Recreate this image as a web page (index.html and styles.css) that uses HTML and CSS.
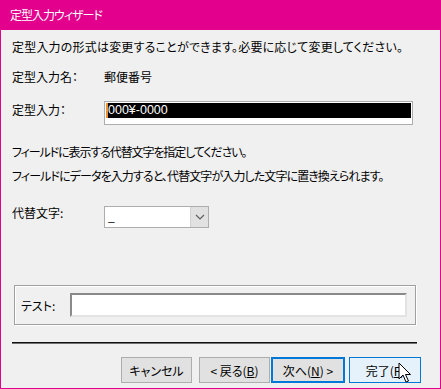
FILE: index.html
```html
<!DOCTYPE html>
<html>

<head>
    <meta charset="UTF-8">
    <title>定型入力ウィザード</title>
    <link rel="stylesheet" href="styles.css">
</head>

<body>
    <div class="window">
        <div class="titlebar">定型入力ウィザード</div>

        <div class="content">
            <p class="line first">定型入力の形式は変更することができます。必要に応じて変更してください。</p>

            <div class="field name-row">
                <span class="label">定型入力名：</span>
                <span class="value">郵便番号</span>
            </div>

            <div class="field mask-row">
                <span class="label">定型入力：</span>
                <div class="mask-box"><span class="selected">000¥-0000</span></div>
            </div>

            <p class="line hint">フィールドに表示する代替文字を指定してください。</p>
            <p class="line hint2">フィールドにデータを入力すると、代替文字が入力した文字に置き換えられます。</p>

            <div class="field placeholder-row">
                <span class="label">代替文字:</span>
                <div class="combo">
                    <span class="combo-text">_</span>
                    <span class="combo-btn">
                        <svg width="10" height="6" viewBox="0 0 10 6"><path d="M1 1 L5 5 L9 1" fill="none" stroke="#606060" stroke-width="1.2"/></svg>
                    </span>
                </div>
            </div>

            <div class="test-group">
                <span class="test-label">テスト:</span>
                <div class="test-input"></div>
            </div>

            <div class="separator"></div>

            <div class="buttons">
                <button class="btn cancel">キャンセル</button>
                <button class="btn back">&lt; 戻る(<u>B</u>)</button>
                <button class="btn next">次へ(<u>N</u>) &gt;</button>
                <button class="btn finish">完了(<u>F</u>)</button>
            </div>
        </div>

        <svg class="cursor" width="14" height="22" viewBox="0 0 14 22">
            <path d="M1 1 L1 17 L5 13 L8 20 L10.5 19 L7.5 12.5 L12.5 12.5 Z" fill="#fff" stroke="#000" stroke-width="1" stroke-linejoin="round"/>
        </svg>
    </div>
</body>

</html>
```

FILE: styles.css
```css
body {
    margin: 0;
    padding: 0;
    font-family: 'Noto Sans CJK JP', 'Noto Sans', sans-serif;
    font-size: 12px;
    font-feature-settings: "palt";
    color: #000;
    background: #f0f0f0;
}

.window {
    position: relative;
    width: 441px;
    height: 389px;
    box-sizing: border-box;
    border: 1px solid #e3008c;
    border-top: none;
    background: #f0f0f0;
    overflow: hidden;
}

.titlebar {
    height: 30px;
    margin: 0 -1px;
    padding-left: 10px;
    background: #e3008c;
    color: #fff;
    line-height: 30px;
    letter-spacing: -1px;
}

.content {
    padding: 0 0 0 11px;
}

.line {
    margin: 0;
    height: 16px;
    line-height: 16px;
    white-space: nowrap;
}

.first {
    margin-top: 9px;
    letter-spacing: 0.2px;
}

.field {
    display: flex;
    align-items: flex-start;
    line-height: 16px;
}

.label {
    width: 92px;
    flex: none;
}

.name-row {
    margin-top: 14px;
    height: 16px;
}

.mask-row {
    margin-top: 17px;
    height: 24px;
}

.mask-box {
    width: 307px;
    height: 22px;
    border: 1px solid #adadad;
    background: #fff;
    margin-top: -1px;
}

.selected {
    display: block;
    margin: 1px 1px 0 1px;
    height: 15px;
    background: #000;
    color: #fff;
    font-family: 'Liberation Sans', 'Noto Sans', sans-serif;
    font-size: 12.5px;
    line-height: 15px;
    border-left: 2px solid #f09030;
}

.hint {
    margin-top: 18px;
    letter-spacing: -1.1px;
}

.hint2 {
    margin-top: 8px;
    letter-spacing: -0.9px;
}

.placeholder-row {
    margin-top: 21px;
    height: 22px;
}

.combo {
    display: flex;
    width: 103px;
    height: 20px;
    border: 1px solid #adadad;
    background: #fff;
    margin-top: 1px;
}

.combo-text {
    flex: 1;
    padding-left: 3px;
    line-height: 18px;
}

.combo-btn {
    width: 17px;
    display: flex;
    align-items: center;
    justify-content: center;
    background: #e1e1e1;
    border-left: 1px solid #d0d0d0;
}

.test-group {
    display: flex;
    align-items: center;
    margin: 58px 0 0 2px;
    width: 400px;
    height: 38px;
    border: 1px solid #a0a0a0;
    box-shadow: inset 1px 1px 0 #fff, 1px 1px 0 #fff;
}

.test-label {
    width: 55px;
    padding-left: 6px;
    box-sizing: border-box;
}

.test-input {
    width: 333px;
    height: 20px;
    border-style: solid;
    border-width: 2px;
    border-color: #8a8a8a #e3e3e3 #e3e3e3 #8a8a8a;
    background: #fff;
}

.separator {
    margin-top: 17px;
    width: 405px;
    height: 0;
    border-top: 1px solid #101010;
    border-bottom: 1px solid #707070;
}

.buttons {
    display: flex;
    justify-content: flex-end;
    margin-top: 13px;
    padding-right: 19px;
}

.btn {
    height: 26px;
    width: 71px;
    box-sizing: border-box;
    margin: 0;
    padding: 0;
    font-family: inherit;
    font-size: 12px;
    font-feature-settings: "palt";
    color: #000;
    background: #e1e1e1;
    border: 1px solid #adadad;
}

.back {
    margin-left: 7px;
}

.next {
    margin-left: 1px;
    width: 74px;
    border: 2px solid #0078d7;
}

.finish {
    margin-left: 4px;
    width: 72px;
    background: #e5f1fb;
    border-color: #0078d7;
}

.cursor {
    position: absolute;
    left: 397px;
    top: 362px;
}
```
